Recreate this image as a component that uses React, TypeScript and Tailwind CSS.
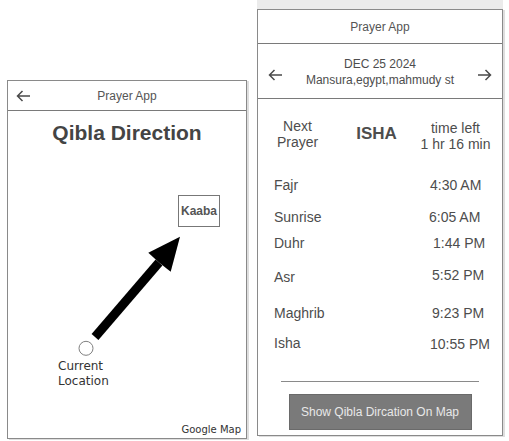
const sans = "font-['Liberation_Sans',Arial,sans-serif]";
const deja = "font-['DejaVu_Sans',sans-serif]";

const ArrowIcon = ({ dir }: { dir: "left" | "right" }) => (
  <svg width="15" height="12" viewBox="0 0 15 12" className={dir === "right" ? "-scale-x-100" : ""}>
    <path d="M14 6H1.5M6.5 1L1.5 6l5 5" fill="none" stroke="#4a4a4a" strokeWidth="1.5" />
  </svg>
);

const prayers = [
  { name: "Fajr", time: "4:30 AM", row: "mt-[10px]", time2: "ml-0" },
  { name: "Sunrise", time: "6:05 AM", row: "mt-[12px]", time2: "-ml-px" },
  { name: "Duhr", time: "1:44 PM", row: "mt-[6px]", time2: "ml-[3px]" },
  { name: "Asr", time: "5:52 PM", row: "mt-[14px]", time2: "ml-[2px] -mt-[2px]" },
  { name: "Maghrib", time: "9:23 PM", row: "mt-[16px]", time2: "ml-[2px]" },
  { name: "Isha", time: "10:55 PM", row: "mt-[10px]", time2: "ml-0 mt-px" },
];

const QiblaScreen = () => (
  <div className="ml-[7px] mt-[80px] flex h-[359px] w-[240px] flex-col border border-[#8a8a8a] bg-white shadow-[2px_1px_0_#dedede]">
    <div className="relative flex h-[30px] shrink-0 items-center justify-center border-b border-[#7a7a7a]">
      <span className="absolute left-[8px] top-[9px]">
        <ArrowIcon dir="left" />
      </span>
      <span className={`${sans} text-[12px] text-[#555]`}>Prayer App</span>
    </div>
    <div className="relative flex-1">
      <h1 className={`${sans} mt-[8px] text-center text-[21px] font-bold leading-[28px] text-[#444]`}>
        Qibla Direction
      </h1>
      <svg className="absolute left-0 top-0" width="238" height="327" viewBox="0 0 238 327">
        <line x1="87" y1="226" x2="151" y2="151.5" stroke="#000" strokeWidth="9" />
        <polygon points="172,125.7 140.3,141.7 151,151.5 162.7,160.7" fill="#000" />
        <circle cx="78" cy="237.3" r="7" fill="none" stroke="#808080" strokeWidth="1" />
      </svg>
      <div className={`${sans} absolute left-[170px] top-[84px] flex h-[32px] w-[42px] items-center justify-center border border-[#777] text-[12px] font-bold text-[#555]`}>
        Kaaba
      </div>
      <div className={`${deja} absolute left-[50px] top-[248px] text-[12px] leading-[15px] text-[#333]`}>
        Current
        <br />
        Location
      </div>
      <div className={`${deja} absolute bottom-[1px] right-[5px] text-[10px] leading-[14px] text-[#333]`}>
        Google Map
      </div>
    </div>
  </div>
);

const TimesScreen = () => (
  <div className="ml-[10px] flex w-[246px] flex-col">
    <div className="h-[9px] bg-[#ebebeb]" />
    <div className={`${sans} flex h-[427px] flex-col border border-[#8a8a8a] bg-white text-[#4d4d4d] shadow-[2px_1px_0_#dedede]`}>
      <div className="flex h-[34px] shrink-0 items-center justify-center border-b border-[#7a7a7a] text-[12px] text-[#555]">
        Prayer App
      </div>
      <div className="flex h-[55px] shrink-0 items-center justify-between border-b border-[#7a7a7a] px-[10px] pt-[8px]">
        <ArrowIcon dir="left" />
        <div className="-mt-[6px] text-center text-[12px] leading-[16px]">
          <div>DEC 25 2024</div>
          <div>Mansura,egypt,mahmudy st</div>
        </div>
        <ArrowIcon dir="right" />
      </div>
      <div className="grid h-[66px] shrink-0 grid-cols-[79px_79px_79px] items-start text-center text-[14px] leading-[16px]">
        <div className="mt-[19px]">
          Next
          <br />
          Prayer
        </div>
        <div className="mt-[24px] text-[17px] font-bold leading-[22px]">ISHA</div>
        <div className="mt-[21px]">
          time left
          <br />1 hr 16 min
        </div>
      </div>
      {prayers.map((p) => (
        <div key={p.name} className={`${p.row} flex h-5 items-start pl-[16px] text-[14px] leading-5`}>
          <span className="w-[156px]">{p.name}</span>
          <span className={p.time2}>{p.time}</span>
        </div>
      ))}
      <div className="mx-auto mt-[28px] h-px w-[198px] bg-[#8a8a8a]" />
      <button className="mx-auto mt-[12px] flex h-[36px] w-[183px] items-center justify-center border border-[#6a6a6a] bg-[#7a7a7a] text-[12px] text-[#e8e8e8]">
        Show Qibla Dircation On Map
      </button>
    </div>
  </div>
);

export default function App() {
  return (
    <div className="flex h-[441px] w-[509px] items-start overflow-hidden bg-white">
      <QiblaScreen />
      <TimesScreen />
    </div>
  );
}
